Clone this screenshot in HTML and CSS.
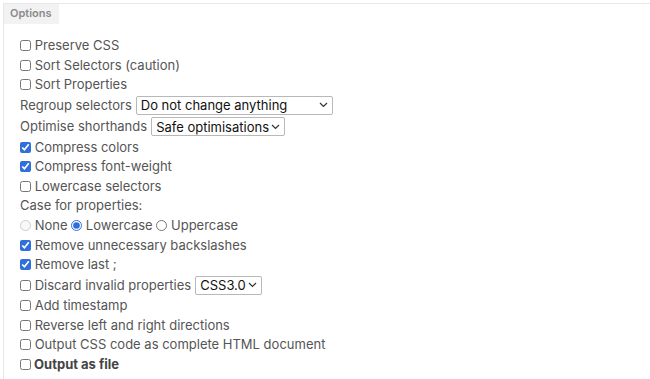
FILE: index.html
```html
<!DOCTYPE html>
<html lang="en">
<head>
    <meta charset="UTF-8">
    <meta name="viewport" content="width=device-width, initial-scale=1.0">
    <title>Options</title>
    <link rel="stylesheet" href="styles.css">
</head>
<body>
    <div class="options">
        <div class="options-title">Options</div>
        <div class="options-body">
            <div class="row"><label><input type="checkbox"> Preserve CSS</label></div>
            <div class="row"><label><input type="checkbox"> Sort Selectors (caution)</label></div>
            <div class="row"><label><input type="checkbox"> Sort Properties</label></div>
            <div class="row row-select">
                Regroup selectors
                <select class="select select-wide">
                    <option>Do not change anything</option>
                </select>
            </div>
            <div class="row row-select">
                Optimise shorthands
                <select class="select">
                    <option>Safe optimisations</option>
                </select>
            </div>
            <div class="row"><label><input type="checkbox" checked> Compress colors</label></div>
            <div class="row"><label><input type="checkbox" checked> Compress font-weight</label></div>
            <div class="row"><label><input type="checkbox"> Lowercase selectors</label></div>
            <div class="row">Case for properties:</div>
            <div class="row">
                <label><input type="radio" name="case" disabled> None</label>
                <label><input type="radio" name="case" checked> Lowercase</label>
                <label><input type="radio" name="case"> Uppercase</label>
            </div>
            <div class="row"><label><input type="checkbox" checked> Remove unnecessary backslashes</label></div>
            <div class="row"><label><input type="checkbox" checked> Remove last ;</label></div>
            <div class="row row-select">
                <label><input type="checkbox"> Discard invalid properties</label>
                <select class="select">
                    <option>CSS3.0</option>
                </select>
            </div>
            <div class="row"><label><input type="checkbox"> Add timestamp</label></div>
            <div class="row"><label><input type="checkbox"> Reverse left and right directions</label></div>
            <div class="row"><label><input type="checkbox"> Output CSS code as complete HTML document</label></div>
            <div class="row row-strong"><label><input type="checkbox"> Output as file</label></div>
        </div>
    </div>
</body>
</html>
```

FILE: styles.css
```css
/* General */
body {
    margin: 0;
    background-color: #fff;
    font-family: Inter, 'Noto Sans', sans-serif;
    font-size: 13px;
    color: #555;
}

/* Options panel */
.options {
    margin: 3px 0 0 3px;
    border-top: 1px solid #e8e8e8;
    border-left: 1px solid #e8e8e8;
}
.options-title {
    display: inline-block;
    background-color: #f2f2f2;
    color: #8a8a8a;
    font-size: 11px;
    font-weight: 600;
    padding: 3px 7px 4px 6px;
    line-height: 13px;
}
.options-body {
    padding: 12px 0 10px 16px;
}

/* Rows */
.row {
    line-height: 19.6px;
    white-space: nowrap;
}
.row-select {
    height: 21.4px;
    display: flex;
    align-items: center;
    gap: 4px;
}
.row-strong {
    font-weight: 700;
    color: #444;
}
label {
    cursor: pointer;
}
input[type="checkbox"],
input[type="radio"] {
    width: 11px;
    height: 11px;
    margin: 0;
    vertical-align: -1px;
    accent-color: #2f6fdc;
}

/* Selects */
.select {
    appearance: none;
    font-family: Inter, 'Noto Sans', sans-serif;
    font-size: 13px;
    color: #111;
    height: 19px;
    padding: 0 15px 0 4px;
    border: 1px solid #b8b8b8;
    border-radius: 2px;
    background-color: #fff;
    background-image: url("data:image/svg+xml,%3Csvg xmlns='http://www.w3.org/2000/svg' width='9' height='6' viewBox='0 0 9 6'%3E%3Cpath d='M1 1l3.5 3.5L8 1' fill='none' stroke='%23333' stroke-width='1.2'/%3E%3C/svg%3E");
    background-repeat: no-repeat;
    background-position: right 4px center;
}
.select-wide {
    width: 197px;
}
```
